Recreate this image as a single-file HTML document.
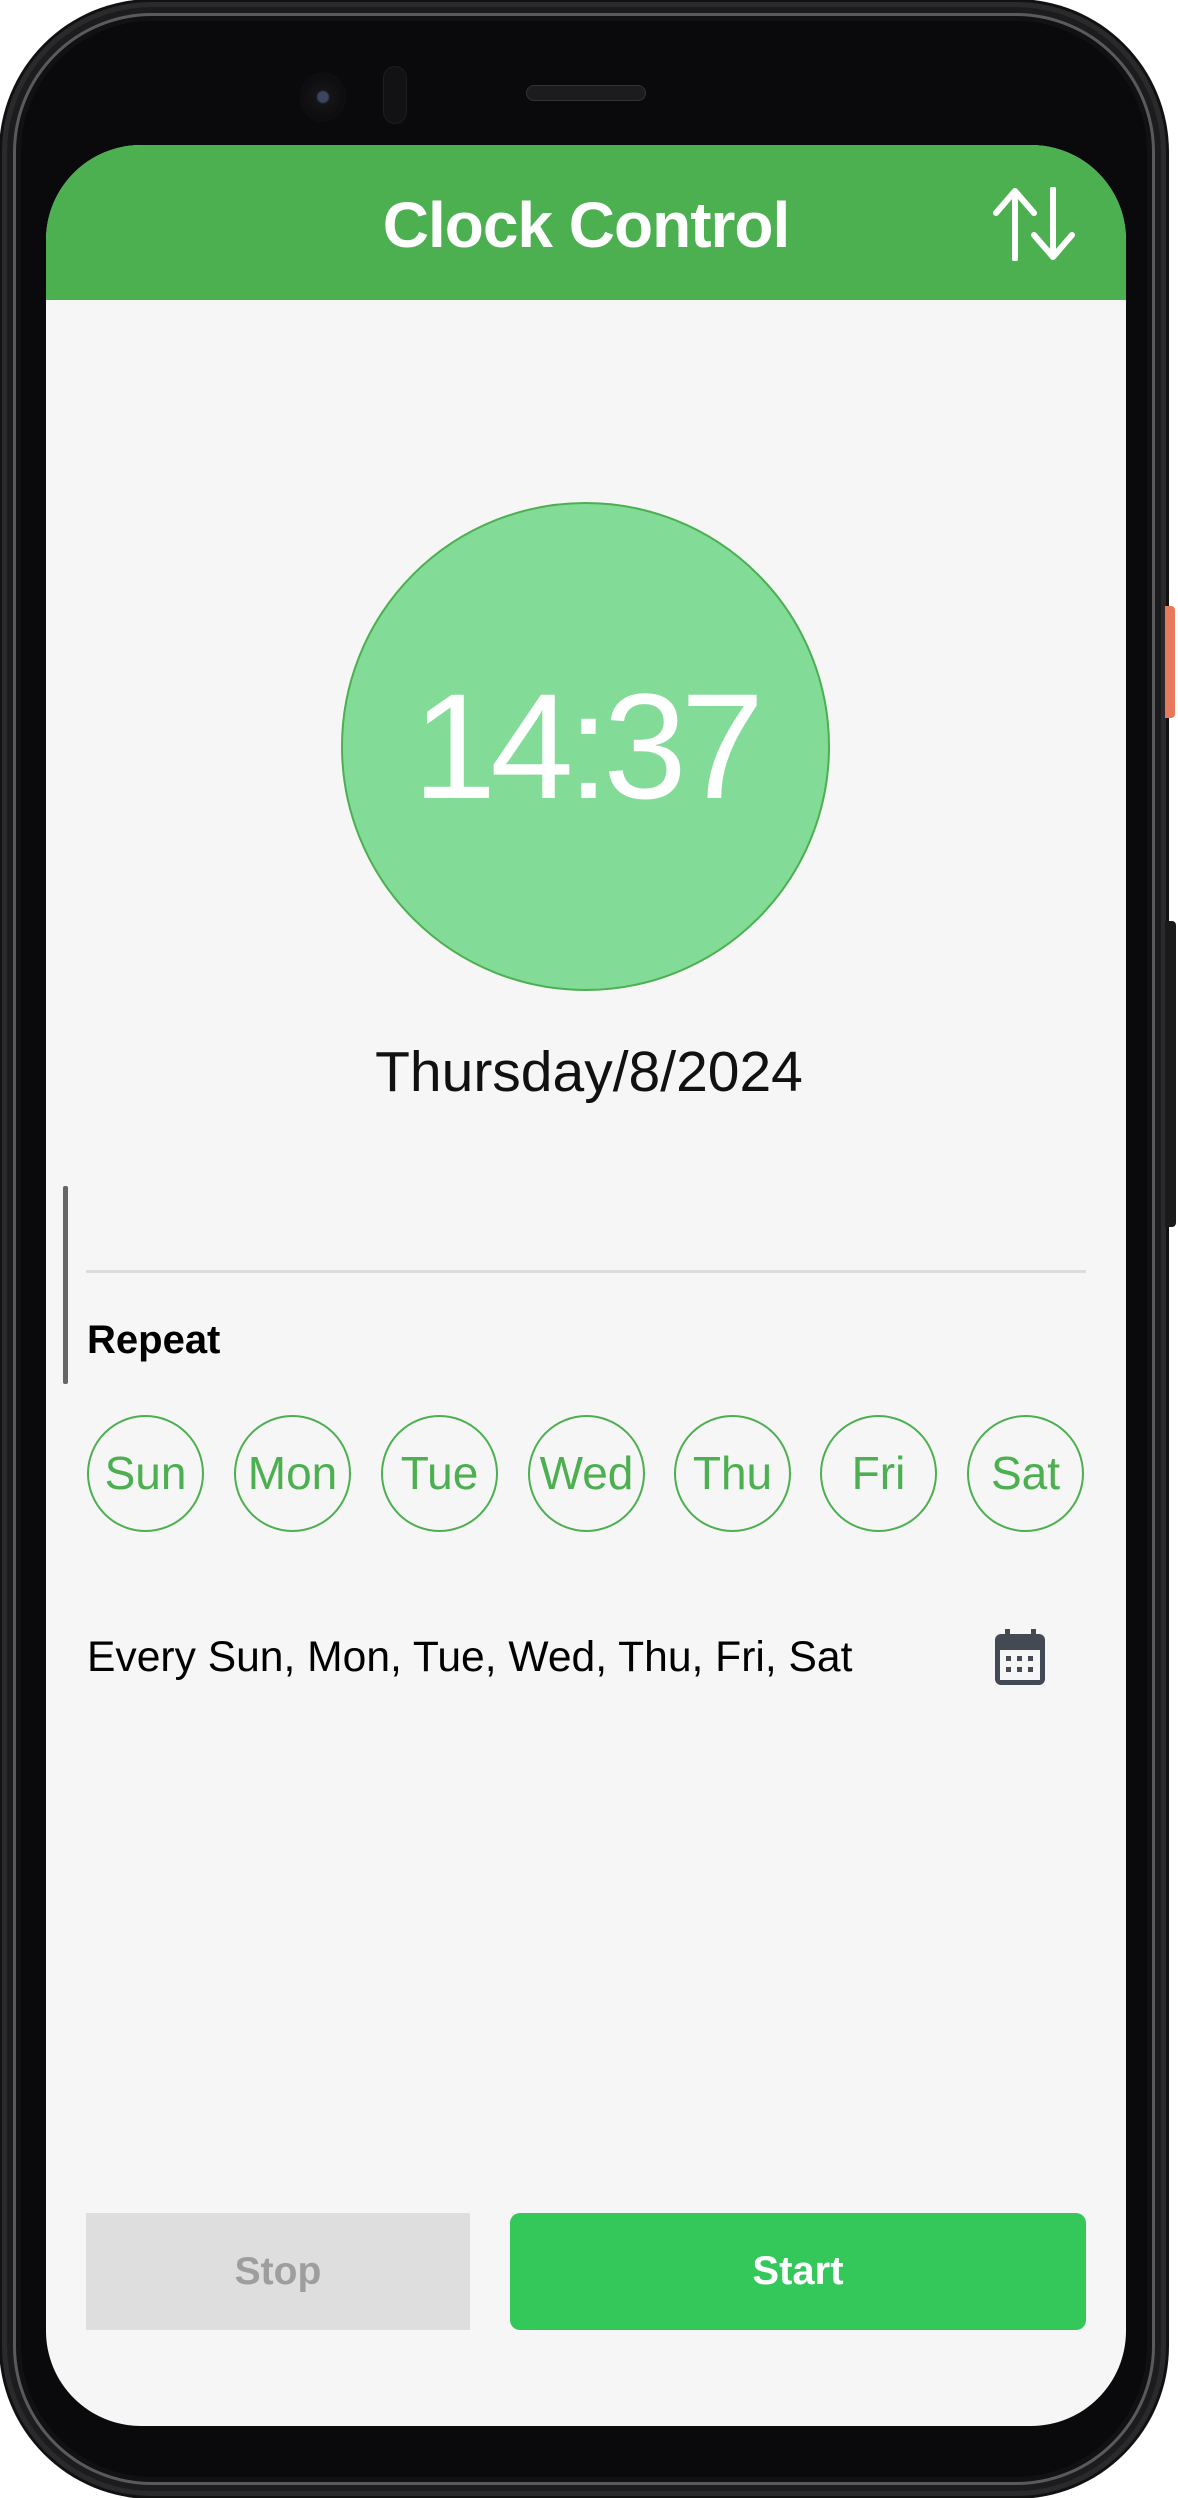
<!DOCTYPE html>
<html><head><meta charset="utf-8"><style>
*{margin:0;padding:0;box-sizing:border-box}
body{width:1178px;height:2498px;background:#fff;position:relative;overflow:hidden;font-family:"Liberation Sans",sans-serif}
.phone{position:absolute;left:2px;top:2px;width:1164px;height:2494px;border-radius:150px;background:#0a0a0c;border:5px solid #2a2a2c;box-shadow:0 0 0 3px #111,inset 0 0 0 6px #1c1c1e,inset 0 0 0 9px #5a5a5c,inset 0 0 0 14px #111}
.btn-o{position:absolute;left:1165px;top:606px;width:10px;height:112px;background:#e9795c;border-radius:0 4px 4px 0}
.btn-k{position:absolute;left:1165px;top:921px;width:11px;height:306px;background:#1a1a1a;border-radius:0 4px 4px 0}
.screen{position:absolute;left:46px;top:145px;width:1080px;height:2281px;background:#f6f6f6;border-radius:95px 95px 95px 95px;overflow:hidden}
.header{position:absolute;left:0;top:0;width:1080px;height:155px;background:#4caf50}
.title{position:absolute;left:0;width:1080px;top:40px;text-align:center;color:#fff;font-weight:bold;font-size:64px;line-height:80px;letter-spacing:-1px}
.cam{position:absolute;left:300px;top:72px;width:46px;height:50px;border-radius:50%;background:radial-gradient(circle at 50% 50%,#3a4660 0 5px,#151518 7px,#0e0e10 20px)}
.cam2{position:absolute;left:383px;top:66px;width:24px;height:58px;border-radius:12px;background:#121214;border:1px solid #1e1e20}
.spk{position:absolute;left:526px;top:85px;width:120px;height:16px;border-radius:8px;background:#1c1c1e;border:1px solid #333}
.clock{position:absolute;left:341px;top:502px;width:489px;height:489px;border-radius:50%;background:#82dc98;border:2px solid #4caf50}
.time{position:absolute;left:0;top:0;width:485px;line-height:485px;text-align:center;color:#fff;font-size:150px;letter-spacing:-6px}
.date{position:absolute;left:0;width:1178px;top:1040px;text-align:center;font-size:57px;color:#111;line-height:64px}
.bar{position:absolute;left:63px;top:1186px;width:5px;height:198px;background:#666;border-radius:2px}
.div{position:absolute;left:86px;top:1270px;width:1000px;height:3px;background:#dcdcdc}
.rep{position:absolute;left:87px;top:1318px;font-size:40px;font-weight:bold;color:#000}
.day{position:absolute;top:1415px;width:117px;height:117px;border-radius:50%;border:2px solid #4caf50;color:#4caf50;font-size:46px;text-align:center;line-height:113px}
.every{position:absolute;left:87px;top:1632px;font-size:42.6px;color:#000;line-height:50px}
.stop{position:absolute;left:86px;top:2213px;width:384px;height:117px;background:#dedede;color:#9e9e9e;font-weight:bold;font-size:39px;text-align:center;line-height:117px}
.start{position:absolute;left:510px;top:2213px;width:576px;height:117px;background:#34c759;border-radius:10px;color:#fff;font-weight:bold;font-size:40px;text-align:center;line-height:117px}
</style></head><body>
<div class="phone"></div>
<div class="btn-o"></div><div class="btn-k"></div>
<div class="cam"></div><div class="cam2"></div><div class="spk"></div>
<div class="screen">
 <div class="header"><div class="title">Clock Control</div>
 <svg style="position:absolute;left:944px;top:42px" width="90" height="74" viewBox="0 0 90 74" fill="none" stroke="#fff" stroke-width="6" stroke-linecap="round" stroke-linejoin="round"><path d="M25 72V4M6 26L25 4 44 26"/><path d="M63 2V70M44 48l19 22 19-22"/></svg>
 </div>
</div>
<div class="clock"><div class="time">14:37</div></div>
<div class="date">Thursday/8/2024</div>
<div class="bar"></div>
<div class="div"></div>
<div class="rep">Repeat</div>
<div class="day" style="left:87px">Sun</div>
<div class="day" style="left:234px">Mon</div>
<div class="day" style="left:381px">Tue</div>
<div class="day" style="left:528px">Wed</div>
<div class="day" style="left:674px">Thu</div>
<div class="day" style="left:820px">Fri</div>
<div class="day" style="left:967px">Sat</div>
<div class="every">Every Sun, Mon, Tue, Wed, Thu, Fri, Sat</div>
<svg style="position:absolute;left:995px;top:1629px" width="50" height="56" viewBox="0 0 50 56"><rect x="10" y="0" width="5" height="8" fill="#434a54"/><rect x="36" y="0" width="5" height="8" fill="#434a54"/><rect x="0" y="5" width="50" height="51" rx="6" fill="#434a54"/><rect x="5" y="21" width="40" height="30" fill="#f6f6f6"/><g fill="#434a54"><rect x="11" y="27" width="5" height="5"/><rect x="22" y="27" width="5" height="5"/><rect x="33" y="27" width="5" height="5"/><rect x="11" y="38" width="5" height="5"/><rect x="22" y="38" width="5" height="5"/><rect x="33" y="38" width="5" height="5"/></g></svg>
<div class="stop">Stop</div>
<div class="start">Start</div>
</body></html>
